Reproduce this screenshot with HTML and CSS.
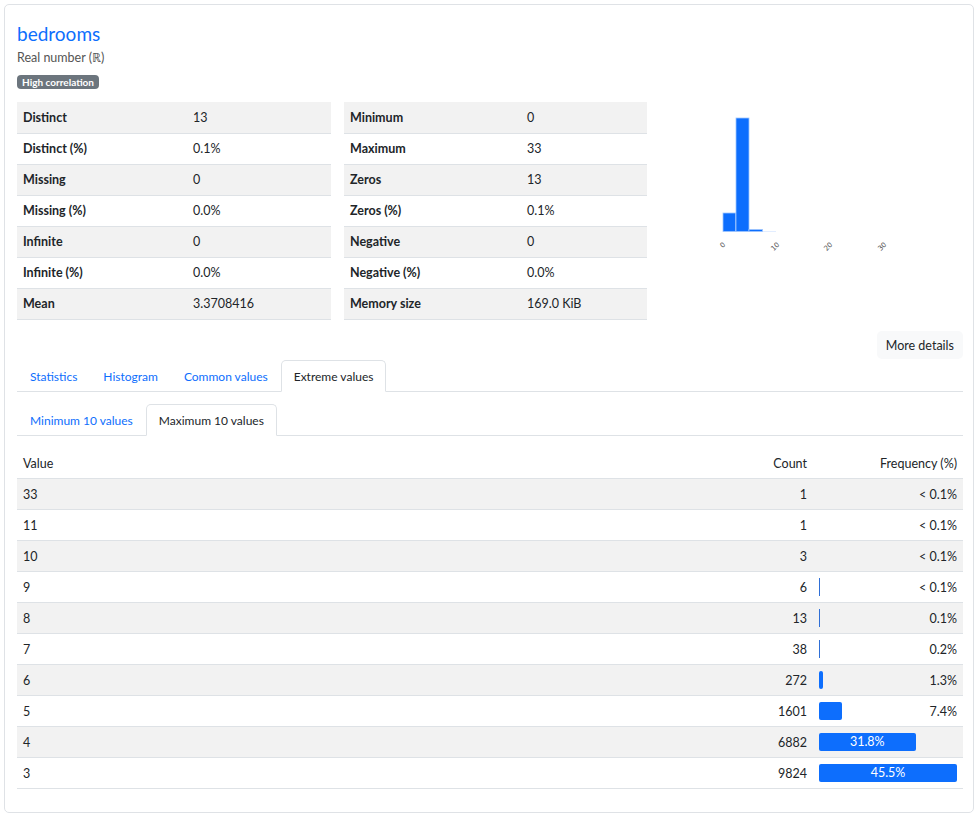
FILE: index.html
```html
<!DOCTYPE html>
<html>
<head>
<meta charset="utf-8">
<link rel="stylesheet" href="styles.css">
</head>
<body>
<div class="card">
  <div class="title">bedrooms</div>
  <div class="subtitle">Real number (ℝ)</div>
  <div class="badges"><span class="badge">High correlation</span></div>

  <div class="overview">
    <table class="stats left">
      <tr><th>Distinct</th><td>13</td></tr>
      <tr><th>Distinct (%)</th><td>0.1%</td></tr>
      <tr><th>Missing</th><td>0</td></tr>
      <tr><th>Missing (%)</th><td>0.0%</td></tr>
      <tr><th>Infinite</th><td>0</td></tr>
      <tr><th>Infinite (%)</th><td>0.0%</td></tr>
      <tr><th>Mean</th><td>3.3708416</td></tr>
    </table>
    <table class="stats right">
      <tr><th>Minimum</th><td>0</td></tr>
      <tr><th>Maximum</th><td>33</td></tr>
      <tr><th>Zeros</th><td>13</td></tr>
      <tr><th>Zeros (%)</th><td>0.1%</td></tr>
      <tr><th>Negative</th><td>0</td></tr>
      <tr><th>Negative (%)</th><td>0.0%</td></tr>
      <tr><th>Memory size</th><td>169.0 KiB</td></tr>
    </table>
    <div class="mini-hist">
      <svg width="316" height="160" viewBox="0 0 316 160">
        <g fill="#0d6efd" stroke="#9ec5fe" stroke-width="0.8">
          <rect x="76" y="111" width="12.8" height="18.5"/>
          <rect x="89" y="16" width="13" height="113.5"/>
          <rect x="102" y="127.5" width="13.5" height="2"/>
        </g>
        <rect x="116" y="129" width="13" height="0.6" fill="#cfe2ff"/>
        <g fill="#555" font-size="7" font-family="'DejaVu Sans', sans-serif" text-anchor="end">
          <text transform="translate(79,143) rotate(-45)">0</text>
          <text transform="translate(133,143) rotate(-45)">10</text>
          <text transform="translate(186,143) rotate(-45)">20</text>
          <text transform="translate(240,143) rotate(-45)">30</text>
        </g>
      </svg>
    </div>
  </div>

  <div class="actions"><span class="btn">More details</span></div>

  <div class="tabs">
    <span class="tab">Statistics</span>
    <span class="tab">Histogram</span>
    <span class="tab">Common values</span>
    <span class="tab active">Extreme values</span>
  </div>
  <div class="tabs sub">
    <span class="tab">Minimum 10 values</span>
    <span class="tab active">Maximum 10 values</span>
  </div>

  <table class="freq">
    <thead>
      <tr><th class="c-val">Value</th><th class="c-count">Count</th><th class="c-freq">Frequency (%)</th></tr>
    </thead>
    <tbody>
      <tr><td>33</td><td class="num">1</td><td><div class="fcell"><span class="lbl">&lt; 0.1%</span></div></td></tr>
      <tr><td>11</td><td class="num">1</td><td><div class="fcell"><span class="lbl">&lt; 0.1%</span></div></td></tr>
      <tr><td>10</td><td class="num">3</td><td><div class="fcell"><span class="lbl">&lt; 0.1%</span></div></td></tr>
      <tr><td>9</td><td class="num">6</td><td><div class="fcell"><div class="bar thin"></div><span class="lbl">&lt; 0.1%</span></div></td></tr>
      <tr><td>8</td><td class="num">13</td><td><div class="fcell"><div class="bar thin"></div><span class="lbl">0.1%</span></div></td></tr>
      <tr><td>7</td><td class="num">38</td><td><div class="fcell"><div class="bar thin"></div><span class="lbl">0.2%</span></div></td></tr>
      <tr><td>6</td><td class="num">272</td><td><div class="fcell"><div class="bar" style="width:3.5px"></div><span class="lbl">1.3%</span></div></td></tr>
      <tr><td>5</td><td class="num">1601</td><td><div class="fcell"><div class="bar" style="width:22.5px"></div><span class="lbl">7.4%</span></div></td></tr>
      <tr><td>4</td><td class="num">6882</td><td><div class="fcell"><div class="bar" style="width:96.5px">31.8%</div></div></td></tr>
      <tr><td>3</td><td class="num">9824</td><td><div class="fcell"><div class="bar" style="width:138px">45.5%</div></div></td></tr>
    </tbody>
  </table>
</div>
</body>
</html>
```

FILE: styles.css
```css
* { box-sizing: border-box; }
body {
  margin: 0;
  font-family: Lato, "Noto Sans", sans-serif;
  font-size: 12.5px;
  color: #212529;
  background: #fff;
}
.card {
  margin: 4px 0 0 4px;
  width: 970px;
  height: 809px;
  border: 1px solid #dfe2e6;
  border-radius: 5px;
  padding: 15px 10px 12px 12px;
}
.title {
  margin-top: 2px;
  font-size: 19px;
  line-height: 24px;
  color: #0d6efd;
  height: 24px;
}
.subtitle {
  margin-top: 4px;
  color: #555;
  font-size: 12.5px;
  line-height: 16px;
}
.badges { margin-top: 9px; height: 14px; display: flex; }
.badge {
  display: inline-block;
  background: #6c757d;
  color: #fff;
  font-weight: 700;
  font-size: 10px;
  line-height: 14px;
  height: 14px;
  padding: 0 5px;
  border-radius: 4px;
}
.overview {
  margin-top: 13px;
  display: flex;
  align-items: flex-start;
}
.stats {
  border-collapse: collapse;
  table-layout: fixed;
}
.stats.left { width: 314px; }
.stats.right { width: 303px; margin-left: 13px; }
.stats th, .stats td {
  height: 31px;
  padding: 0 6px;
  border-bottom: 1px solid #dee2e6;
  text-align: left;
  font-size: 12.5px;
  vertical-align: middle;
}
.stats th { font-weight: 700; }
.stats.left th { width: 170px; }
.stats.right th { width: 177px; }
.stats tr:nth-child(odd) { background: #f2f2f2; }
.mini-hist { flex: 1; display: flex; }
.mini-hist svg { display: block; }
.actions {
  margin-top: 11px;
  display: flex;
  justify-content: flex-end;
}
.btn {
  display: inline-block;
  height: 28px;
  line-height: 29px;
  padding: 0 9px;
  background: #f8f9fa;
  border-radius: 5px;
  font-size: 12.5px;
  color: #212529;
}
.tabs {
  display: flex;
  border-bottom: 1px solid #dee2e6;
  height: 32px;
  margin-top: 1px;
}
.tabs.sub { margin-top: 12px; }
.tab {
  display: inline-block;
  height: 32px;
  line-height: 30px;
  padding: 1px 12px 0;
  border: 1px solid transparent;
  border-radius: 5px 5px 0 0;
  color: #0d6efd;
  font-size: 12px;
}
.tab.active {
  color: #212529;
  border-color: #dee2e6 #dee2e6 #fff;
  background: #fff;
}
.freq {
  margin-top: 12px;
  width: 946px;
  border-collapse: collapse;
  table-layout: fixed;
}
.freq th, .freq td {
  height: 31px;
  padding: 0 6px;
  border-bottom: 1px solid #dee2e6;
  font-size: 12.5px;
  font-weight: 400;
  vertical-align: middle;
}
.freq th { text-align: left; padding-top: 1px; }
.freq .c-val { width: auto; }
.freq .c-count { width: 100px; text-align: right; }
.freq .c-freq { width: 150px; text-align: right; }
.freq td.num { text-align: right; }
.freq tbody tr:nth-child(odd) { background: #f2f2f2; }
.fcell {
  display: flex;
  align-items: center;
  height: 18px;
}
.bar {
  height: 18px;
  background: #0d6efd;
  border-radius: 2px;
  color: #fff;
  text-align: center;
  line-height: 18px;
  font-size: 12.5px;
  flex: none;
}
.bar.thin { width: 1px; border-radius: 0; background: #2f6fd6; }
.lbl { margin-left: auto; }
```
